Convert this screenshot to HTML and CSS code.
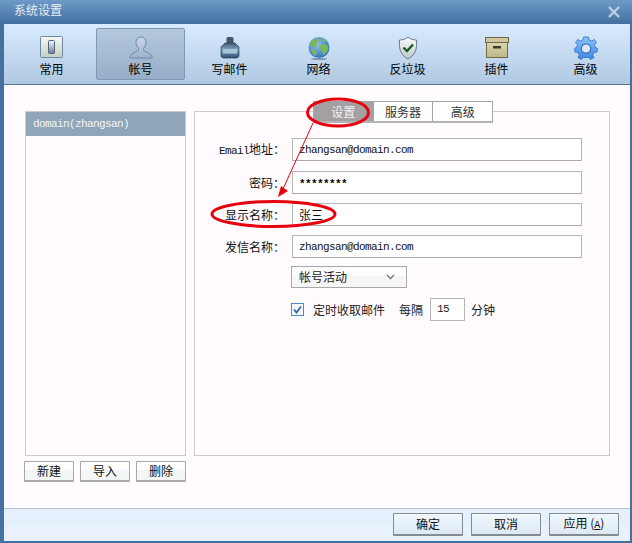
FILE: index.html
```html
<!DOCTYPE html>
<html lang="zh">
<head>
<meta charset="utf-8">
<title>系统设置</title>
<link rel="stylesheet" href="styles.css">
</head>
<body>
<div class="window">
  <header class="titlebar">
    <span class="title">系统设置</span>
    <svg class="close" width="14" height="14" viewBox="0 0 14 14"><path d="M2 2 12 12M12 2 2 12" stroke="#bdd0e3" stroke-width="2.400" fill="none"/></svg>
  </header>
  <div class="content">
    <nav class="toolbar">
      <div class="tool">
        <svg width="24" height="24" viewBox="0 0 24 24"><defs><linearGradient id="g1" x1="0" y1="0" x2="0" y2="1"><stop offset="0" stop-color="#f7f8f5"/><stop offset="1" stop-color="#c4cec4"/></linearGradient><linearGradient id="g2" x1="0" y1="0" x2="0" y2="1"><stop offset="0" stop-color="#f4f7fa"/><stop offset=".4" stop-color="#c0cad4"/><stop offset="1" stop-color="#6a7b8c"/></linearGradient></defs><rect x=".5" y=".5" width="22" height="21" rx="1" fill="url(#g1)" stroke="#6f88a6"/><rect x="8.500" y="4.500" width="6" height="13" rx="1" fill="url(#g2)" stroke="#4d6480"/></svg>
        <span>常用</span>
      </div>
      <div class="tool active">
        <svg width="24" height="24" viewBox="0 0 24 24"><defs><linearGradient id="g3" x1="0" y1="0" x2="0" y2="1"><stop offset="0" stop-color="#c8d6ea"/><stop offset="1" stop-color="#9db0cc"/></linearGradient></defs><path d="M12 1C8.700 1 7 3.600 7 6.600 7 9.200 8.200 11.200 9.500 12.500V14.500C7 16 2.600 17 1 20.500V22H23V20.500C21.400 17 17 16 14.500 14.500V12.500C15.800 11.200 17 9.200 17 6.600 17 3.600 15.300 1 12 1Z" fill="url(#g3)" stroke="#7088ab"/></svg>
        <span>帐号</span>
      </div>
      <div class="tool">
        <svg width="24" height="24" viewBox="0 0 24 24"><defs><linearGradient id="g4" x1="0" y1="0" x2="0" y2="1"><stop offset="0" stop-color="#46586e"/><stop offset=".45" stop-color="#7ba7c6"/><stop offset="1" stop-color="#2f4a6c"/></linearGradient></defs><rect x="8.500" y="1" width="7" height="7" rx="1.500" fill="#46566a"/><path d="M7 7H17L21 11V20.500L19 22H5L3 20.500V11Z" fill="url(#g4)" stroke="#2e4058" stroke-width=".7"/><rect x="5" y="13" width="14" height="4.500" fill="#a9c5da"/></svg>
        <span>写邮件</span>
      </div>
      <div class="tool">
        <svg width="24" height="24" viewBox="0 0 24 24"><defs><radialGradient id="g5" cx=".4" cy=".35" r=".75"><stop offset="0" stop-color="#8ec2f0"/><stop offset="1" stop-color="#2c68b4"/></radialGradient></defs><circle cx="12" cy="11.500" r="10.500" fill="url(#g5)"/><path d="M5 4 10 2.500 12 5 9.500 7.500 10 10.500 6 11 3 9.500C3 7.500 3.800 5.500 5 4ZM13 9 18 8 21.500 10.500 20.500 15 16.500 19.500 15 15.500 12 12.500ZM15 2 19 4 18.500 6 15.500 5.500ZM4 13 8.500 14 10 17.500 8.500 20C6 18.500 4.500 16 4 13Z" fill="#79b85a"/><ellipse cx="12" cy="23" rx="8" ry="1" fill="#7f93ab"/></svg>
        <span>网络</span>
      </div>
      <div class="tool">
        <svg width="24" height="24" viewBox="0 0 24 24"><defs><linearGradient id="g6" x1="0" y1="0" x2="0" y2="1"><stop offset="0" stop-color="#fbfcfb"/><stop offset="1" stop-color="#bfc8cf"/></linearGradient></defs><path d="M12 1C10 3 6.500 4 3.500 4 3 11 3.500 18.500 12 23 20.500 18.500 21 11 20.500 4 17.500 4 14 3 12 1Z" fill="url(#g6)" stroke="#68788a"/><path d="M7.500 11.500 11 15 17 8.500" stroke="#1d5a28" stroke-width="2.400" fill="none"/></svg>
        <span>反垃圾</span>
      </div>
      <div class="tool">
        <svg width="24" height="24" viewBox="0 0 24 24"><defs><linearGradient id="g7" x1="0" y1="0" x2="0" y2="1"><stop offset="0" stop-color="#dbd5ae"/><stop offset="1" stop-color="#bfb78a"/></linearGradient></defs><rect x="1.500" y="6.500" width="21" height="15" fill="url(#g7)" stroke="#6f6a45"/><rect x=".5" y="1.500" width="23" height="5" fill="#cfc89e" stroke="#6f6a45"/><rect x="8" y="10" width="8" height="2.500" fill="#3e3c2a"/></svg>
        <span>插件</span>
      </div>
      <div class="tool">
        <svg width="24" height="24" viewBox="0 0 24 24"><defs><linearGradient id="g8" x1="0" y1="0" x2="0" y2="1"><stop offset="0" stop-color="#8cc4fa"/><stop offset="1" stop-color="#3d86e0"/></linearGradient></defs><path d="M9.500 1H14.500L15.200 4 17.700 5 20.300 3.500 22.500 6.500 20.500 8.700 21 11 23.500 12.500 23 16 20 16.500 18.700 19 20 21.500 16.700 23.500 14.700 21.500H9.300L7.300 23.500 4 21.500 5.300 19 4 16.500 1 16 .5 12.500 3 11 3.500 8.700 1.500 6.500 3.700 3.500 6.300 5 8.800 4Z" fill="url(#g8)" stroke="#2f6fc0" stroke-width=".8"/><circle cx="12" cy="12.500" r="4.700" fill="#dbe7f3" stroke="#2f6fc0" stroke-width="1.200"/></svg>
        <span>高级</span>
      </div>
    </nav>
    <main class="body">
      <aside class="side">
        <div class="list">
          <div class="list-item mono">domain(zhangsan)</div>
        </div>
        <div class="side-buttons">
          <button class="btn">新建</button>
          <button class="btn">导入</button>
          <button class="btn">删除</button>
        </div>
      </aside>
      <section class="panel">
        <div class="tabs">
          <div class="tab on">设置</div>
          <div class="tab">服务器</div>
          <div class="tab">高级</div>
        </div>
        <form class="form">
          <div class="row">
            <label class="label"><span class="mono">Email</span>地址：</label>
            <div class="field mono">zhangsan@domain.com</div>
          </div>
          <div class="row row-b">
            <label class="label">密码：</label>
            <div class="field mono stars">********</div>
          </div>
          <div class="row">
            <label class="label">显示名称：</label>
            <div class="field">张三</div>
          </div>
          <div class="row">
            <label class="label">发信名称：</label>
            <div class="field mono">zhangsan@domain.com</div>
          </div>
          <div class="select">
            <span>帐号活动</span>
            <svg width="9" height="6" viewBox="0 0 9 6"><path d="M1 1 4.500 4.500 8 1" stroke="#777" stroke-width="1.300" fill="none"/></svg>
          </div>
          <div class="options">
            <svg class="check" width="13" height="13" viewBox="0 0 13 13"><rect x=".5" y=".5" width="12" height="12" fill="#f4f8fc" stroke="#4f8ac4"/><path d="M3 6.500 5.500 9.500 10 3.500" stroke="#2a69ad" stroke-width="1.800" fill="none"/></svg>
            <span class="opt-label">定时收取邮件</span>
            <span class="every">每隔</span>
            <div class="small-field mono">15</div>
            <span>分钟</span>
          </div>
        </form>
      </section>
    </main>
    <footer class="footer">
      <button class="btn btn-main">确定</button>
      <button class="btn btn-main">取消</button>
      <button class="btn btn-main">应用 (<u>A</u>)</button>
    </footer>
  </div>
  <svg class="marks" width="632" height="543" viewBox="0 0 632 543">
    <ellipse cx="338" cy="112.500" rx="30.500" ry="13.500" fill="none" stroke="#e8000c" stroke-width="3"/>
    <ellipse cx="273.500" cy="214" rx="61.500" ry="12.500" fill="none" stroke="#e8000c" stroke-width="3"/>
    <path d="M313 123 283 189" stroke="#e8000c" fill="none"/>
    <path d="M278 197 281 186 288 191Z" fill="#e8000c"/>
  </svg>
</div>
</body>
</html>
```
FILE: styles.css
```css
* { box-sizing: border-box; }
html, body { margin: 0; padding: 0; }
body {
  width: 632px;
  height: 543px;
  overflow: hidden;
  font-family: "Noto Sans CJK SC", "Liberation Sans", sans-serif;
  font-size: 12px;
  color: #111;
}
.mono {
  font-family: "Liberation Mono", "Noto Sans CJK SC", monospace;
  font-size: 11px;
  letter-spacing: -0.6px;
}
.window {
  position: relative;
  width: 632px;
  height: 543px;
  display: flex;
  flex-direction: column;
  background: #44719f;
}
.titlebar {
  height: 24px;
  flex: none;
  display: flex;
  align-items: center;
  justify-content: space-between;
  padding: 0 11px 5px 14px;
  background: linear-gradient(#6e9ac8, #44709f);
}
.title { color: #e8eef5; line-height: 16px; }
.close { display: block; margin-top: 4px; }
.content {
  flex: 1;
  margin: 0 2px 2px 4px;
  display: flex;
  flex-direction: column;
  min-height: 0;
}
.toolbar {
  height: 61px;
  flex: none;
  display: grid;
  grid-template-columns: repeat(7, 89px);
  padding: 4px 0 0 3px;
  background: linear-gradient(#d8ecff, #b0c8e2);
  border-bottom: 1px solid #5a7596;
}
.tool {
  height: 52px;
  display: flex;
  flex-direction: column;
  align-items: center;
  padding-top: 7px;
  gap: 1px;
  font-size: 12px;
  line-height: 16px;
  color: #000;
  border: 1px solid transparent;
  border-radius: 2px;
}
.tool svg { display: block; flex: none; }
.tool.active {
  background: linear-gradient(#b4c9dd, #96aec8);
  border-color: #7f9ab6;
}
.body {
  flex: 1;
  min-height: 0;
  display: flex;
  gap: 8px;
  padding: 26px 20px 0 21px;
  background: #fffbff;
}
.side { width: 161px; flex: none; }
.list {
  height: 345px;
  background: #fffbff;
  border: 1px solid #cdcbcf;
}
.list-item {
  height: 24px;
  line-height: 25px;
  padding-left: 7px;
  color: #f2f5f8;
  background: #8fa5b9;
}
.side-buttons {
  display: flex;
  gap: 6px;
  width: 162px;
  margin: 5px 0 0 -1px;
}
.btn {
  width: 50px;
  height: 21px;
  padding: 0;
  font-family: inherit;
  font-size: 12px;
  line-height: 18px;
  color: #111;
  background: linear-gradient(#fdfdfd 45%, #f4f6f6 45%);
  border: 1px solid #a8a8a8;
  border-bottom-width: 2px;
  border-radius: 1px;
}
.panel {
  flex: 1;
  height: 345px;
  border: 1px solid #cdcbcf;
  min-width: 0;
}
.tabs {
  display: flex;
  width: 180px;
  height: 22px;
  margin: -11px 0 0 118px;
  background: #fff;
  border: 1px solid #a4a4a4;
  border-bottom-width: 2px;
  border-bottom-color: #b4b4b4;
}
.tab {
  flex: 1;
  text-align: center;
  line-height: 20px;
  color: #333;
  border-left: 1px solid #a4a4a4;
}
.tab:first-child { border-left: 0; }
.tab.on { background: #a2a0a2; color: #f4f4f4; }
.form {
  display: flex;
  flex-direction: column;
  gap: 9px;
  padding-top: 15px;
}
.row {
  display: flex;
  align-items: center;
  height: 23px;
}
.row-b { margin-top: 1px; }
.label {
  width: 97px;
  flex: none;
  padding-right: 7px;
  text-align: right;
  white-space: nowrap;
  line-height: 16px;
}
.field {
  width: 290px;
  height: 23px;
  line-height: 22px;
  padding-left: 6px;
  background: #fff;
  border: 1px solid #b6b6b6;
  border-bottom-color: #aaa;
}
.stars { line-height: 25px; font-weight: 700; color: #000; }
.select {
  width: 116px;
  height: 22px;
  margin: -1px 0 0 96px;
  padding: 0 11px 0 7px;
  display: flex;
  align-items: center;
  justify-content: space-between;
  line-height: 16px;
  color: #222;
  background: linear-gradient(#fdfdfd 45%, #f6f6f6 45%);
  border: 1px solid #a8a8a8;
}
.options {
  display: flex;
  align-items: center;
  height: 23px;
  margin: 1px 0 0 96px;
  color: #222;
}
.check { display: block; flex: none; }
.opt-label { margin-left: 9px; }
.every { margin-left: 14px; }
.small-field {
  width: 35px;
  height: 23px;
  margin: 0 6px 0 7px;
  padding-left: 6px;
  line-height: 21px;
  background: #fff;
  border: 1px solid #b6b6b6;
}
.footer {
  height: 33px;
  flex: none;
  display: flex;
  justify-content: flex-end;
  gap: 8px;
  padding: 4px 11px 0 0;
  background: linear-gradient(#e4f1fd 50%, #e9f1fd 50%);
  border-top: 1px solid #b6c2d0;
}
.btn-main {
  width: 70px;
  height: 23px;
  background: linear-gradient(#f0f7fd, #dce9f4);
  border-color: #848b92;
}
.btn-main u {
  font-family: "Liberation Mono", monospace;
  font-size: 10px;
}
.marks {
  position: absolute;
  left: 0;
  top: 0;
  pointer-events: none;
}
```
